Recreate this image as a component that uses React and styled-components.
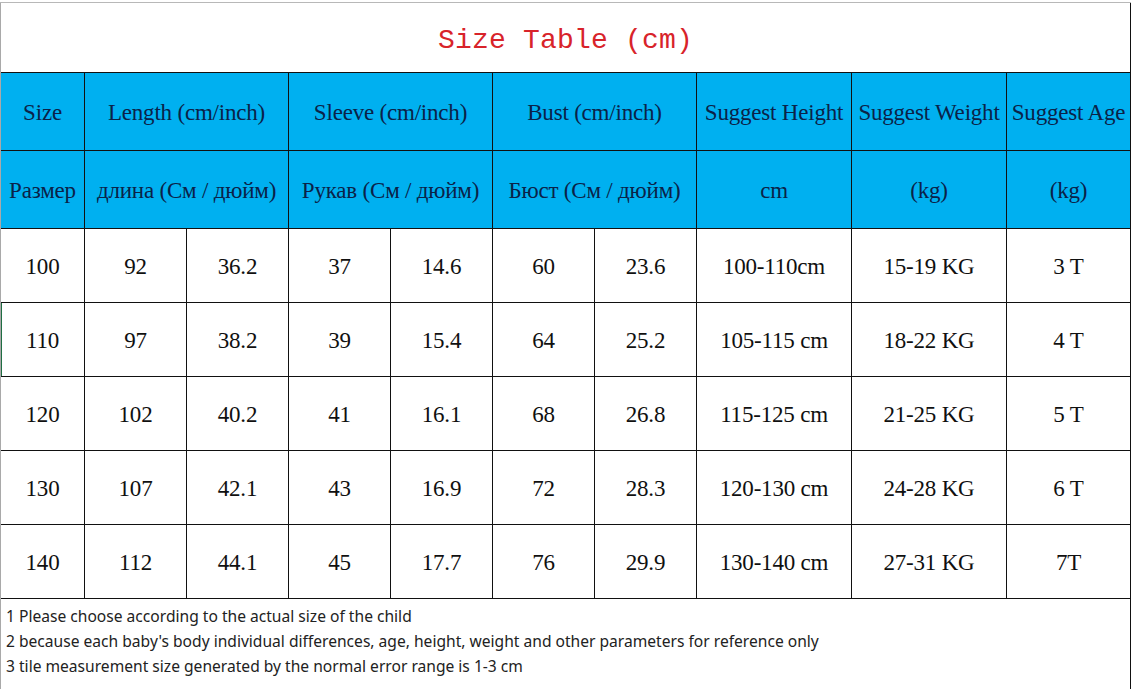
import React from "react";
import styled, { createGlobalStyle } from "styled-components";

const GlobalStyle = createGlobalStyle`
  html, body {
    margin: 0;
    padding: 0;
    background: #ffffff;
  }
`;

const Page = styled.div`
  width: 1133px;
  height: 689px;
  overflow: hidden;
  background: #ffffff;
`;

const TopStrip = styled.div`
  height: 2px;
  width: 1131px;
  border-bottom: 1px solid #b8b8b8;
`;

const Sheet = styled.div`
  display: grid;
  grid-template-columns: 83px repeat(6, 101px) 154px 154px 123px;
  grid-template-rows: 69px 77px 77px repeat(5, 73px) 92px;
  gap: 1px;
  width: 1131px;
  box-sizing: border-box;
  background: #111111;
  border-left: 1px solid #a9a9a9;
  border-right: 1px solid #111111;
`;

const Title = styled.div`
  grid-column: 1 / -1;
  background: #ffffff;
  display: flex;
  align-items: center;
  justify-content: center;
  padding-top: 6px;
  font-family: "Liberation Mono", "DejaVu Sans Mono", monospace;
  font-size: 28px;
  color: #d8232a;
  letter-spacing: 0.2px;
`;

const Cell = styled.div`
  grid-column: span ${(p) => p.span || 1};
  background: ${(p) => (p.head ? "#00b0f0" : "#ffffff")};
  color: ${(p) => (p.head ? "#0b2248" : "#101010")};
  display: flex;
  align-items: center;
  justify-content: center;
  padding-top: 2px;
  font-family: "Liberation Serif", "Times New Roman", serif;
  font-size: 23px;
  letter-spacing: -0.2px;
  white-space: nowrap;
  overflow: hidden;
  box-shadow: ${(p) => (p.marked ? "inset 1px 0 0 #1f6e43" : "none")};
`;

const Notes = styled.div`
  grid-column: 1 / -1;
  background: #ffffff;
  padding: 5px 0 0 5px;
  font-family: "Noto Sans", "DejaVu Sans", sans-serif;
  font-size: 15.6px;
  line-height: 25px;
  color: #222222;
`;

const headTop = [
  { text: "Size" },
  { text: "Length (cm/inch)", span: 2 },
  { text: "Sleeve (cm/inch)", span: 2 },
  { text: "Bust (cm/inch)", span: 2 },
  { text: "Suggest Height" },
  { text: "Suggest Weight" },
  { text: "Suggest Age" },
];

const headSub = [
  { text: "Размер" },
  { text: "длина (См / дюйм)", span: 2 },
  { text: "Рукав (См / дюйм)", span: 2 },
  { text: "Бюст (См / дюйм)", span: 2 },
  { text: "cm" },
  { text: "(kg)" },
  { text: "(kg)" },
];

const rows = [
  ["100", "92", "36.2", "37", "14.6", "60", "23.6", "100-110cm", "15-19 KG", "3 T"],
  ["110", "97", "38.2", "39", "15.4", "64", "25.2", "105-115 cm", "18-22 KG", "4 T"],
  ["120", "102", "40.2", "41", "16.1", "68", "26.8", "115-125 cm", "21-25 KG", "5 T"],
  ["130", "107", "42.1", "43", "16.9", "72", "28.3", "120-130 cm", "24-28 KG", "6 T"],
  ["140", "112", "44.1", "45", "17.7", "76", "29.9", "130-140 cm", "27-31 KG", "7T"],
];

const notes = [
  "1 Please choose according to the actual size of the child",
  "2 because each baby's body individual differences, age, height, weight and other parameters for reference only",
  "3 tile measurement size generated by the normal error range is 1-3 cm",
];

export default function App() {
  return (
    <Page>
      <GlobalStyle />
      <TopStrip />
      <Sheet>
        <Title>Size Table (cm)</Title>
        {headTop.map((h, i) => (
          <Cell head key={`t${i}`} span={h.span}>
            {h.text}
          </Cell>
        ))}
        {headSub.map((h, i) => (
          <Cell head key={`s${i}`} span={h.span}>
            {h.text}
          </Cell>
        ))}
        {rows.map((row, r) =>
          row.map((v, c) => (
            <Cell key={`${r}-${c}`} marked={r === 1 && c === 0}>
              {v}
            </Cell>
          ))
        )}
        <Notes>
          {notes.map((n) => (
            <div key={n}>{n}</div>
          ))}
        </Notes>
      </Sheet>
    </Page>
  );
}
